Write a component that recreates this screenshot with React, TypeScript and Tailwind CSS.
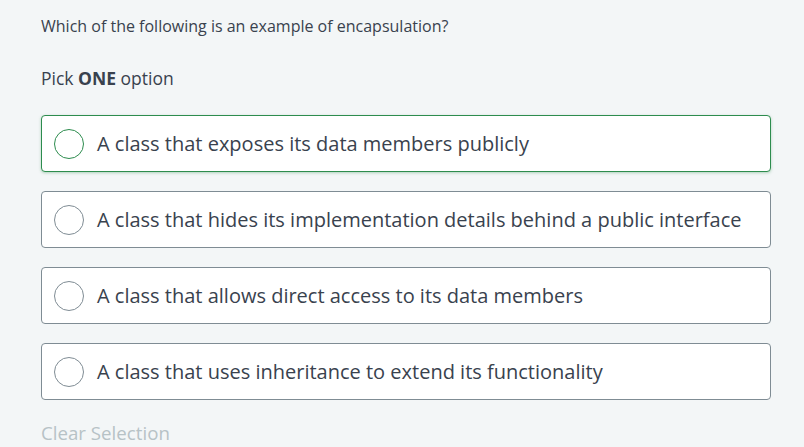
const options = [
  "A class that exposes its data members publicly",
  "A class that hides its implementation details behind a public interface",
  "A class that allows direct access to its data members",
  "A class that uses inheritance to extend its functionality",
]

export default function App() {
  return (
    <div
      className="w-[804px] h-[447px] overflow-hidden bg-[#f3f6f7] pl-[41px] pr-[33px] pt-[16px]"
      style={{ fontFamily: '"Open Sans", sans-serif' }}
    >
      <p className="text-[16px] leading-[20px] text-[#39424e]">
        Which of the following is an example of encapsulation?
      </p>
      <p className="mt-[30px] text-[17.5px] leading-[24px] text-[#39424e]">
        Pick <span className="font-bold">ONE</span> option
      </p>
      <div className="mt-[25px] flex flex-col gap-[19px]">
        {options.map((o, i) => (
          <div
            key={o}
            className={
              i === 0
                ? "h-[57px] flex items-center gap-[13px] px-[12px] bg-white rounded-[4px] border border-[#2d8c4e] shadow-[0_1px_3px_rgba(45,140,78,0.35)]"
                : "h-[57px] flex items-center gap-[13px] px-[12px] bg-white rounded-[4px] border border-[#7f8c94]"
            }
          >
            <span
              className={
                i === 0
                  ? "w-[30px] h-[30px] shrink-0 rounded-full border border-[#2d8c4e]"
                  : "w-[30px] h-[30px] shrink-0 rounded-full border border-[#7f8c94]"
              }
            />
            <span className="text-[20px] text-[#39424e]">{o}</span>
          </div>
        ))}
      </div>
      <p className="mt-[21px] text-[18.7px] leading-[24px] text-[#b7c2c6]">Clear Selection</p>
    </div>
  )
}
